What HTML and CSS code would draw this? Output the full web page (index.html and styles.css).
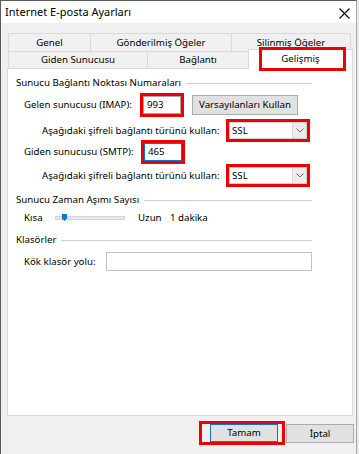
FILE: index.html
```html
<!DOCTYPE html>
<html lang="tr">
<head>
<meta charset="utf-8">
<title>Internet E-posta Ayarları</title>
<link rel="stylesheet" href="styles.css">
</head>
<body>
<div class="window">
  <div class="titlebar">
    <span class="title">Internet E-posta Ayarları</span>
    <svg class="close" width="11" height="11" viewBox="0 0 11 11"><path d="M0.5 0.5 L10.5 10.5 M10.5 0.5 L0.5 10.5" stroke="#000" stroke-width="1.1" fill="none"/></svg>
  </div>

  <div class="tabs">
    <div class="tabrow back">
      <div class="tab w83">Genel</div>
      <div class="tab w142">Gönderilmiş Öğeler</div>
      <div class="tab w120">Silinmiş Öğeler</div>
    </div>
    <div class="tabrow front">
      <div class="tab w140">Giden Sunucusu</div>
      <div class="tab w102">Bağlantı</div>
      <div class="tab w105 selected">Gelişmiş<span class="mark-tab"></span></div>
    </div>
  </div>

  <div class="panel">
    <div class="group-head g1"><span>Sunucu Bağlantı Noktası Numaraları</span></div>

    <div class="row r1">
      <span class="label lw116">Gelen sunucusu (IMAP):</span>
      <span class="mark mark-port"><span class="input port">993</span></span>
      <span class="btn defaults">Varsayılanları Kullan</span>
    </div>

    <div class="row r2 sub">
      <span class="label lw184">Aşağıdaki şifreli bağlantı türünü kullan:</span>
      <span class="mark mark-sel"><span class="select"><span class="sel-text">SSL</span><span class="sel-btn"><svg width="8" height="5" viewBox="0 0 8 5"><path d="M0.5 0.5 L4 4 L7.5 0.5" stroke="#707070" fill="none"/></svg></span></span></span>
    </div>

    <div class="row r3">
      <span class="label lw117">Giden sunucusu (SMTP):</span>
      <span class="mark mark-port"><span class="input port focused">465</span></span>
    </div>

    <div class="row r4 sub">
      <span class="label lw184">Aşağıdaki şifreli bağlantı türünü kullan:</span>
      <span class="mark mark-sel"><span class="select"><span class="sel-text">SSL</span><span class="sel-btn"><svg width="8" height="5" viewBox="0 0 8 5"><path d="M0.5 0.5 L4 4 L7.5 0.5" stroke="#707070" fill="none"/></svg></span></span></span>
    </div>

    <div class="group-head g2"><span>Sunucu Zaman Aşımı Sayısı</span></div>

    <div class="row slider-row">
      <span class="label lw31">Kısa</span>
      <span class="track"><span class="thumb"></span></span>
      <span class="label lw32 uzun">Uzun</span>
      <span class="label">1 dakika</span>
    </div>

    <div class="group-head g3"><span>Klasörler</span></div>

    <div class="row kok">
      <span class="label lw82">Kök klasör yolu:</span>
      <span class="input path"></span>
    </div>
  </div>

  <div class="footer">
    <span class="mark mark-ok"><span class="btn ok">Tamam</span></span>
    <span class="btn cancel">İptal</span>
  </div>
</div>
</body>
</html>
```

FILE: styles.css
```css
* { box-sizing: border-box; }
html, body { margin: 0; padding: 0; }
body {
  width: 359px;
  height: 454px;
  background: #e9e9e9;
  font-family: "Noto Sans", "Open Sans", sans-serif;
  font-size: 9.7px;
  color: #000;
  overflow: hidden;
}
.window {
  width: 357px;
  height: 454px;
  background: #f0f0f0;
  border-left: 1px solid #5a5a5a;
  border-top: 1px solid #5a5a5a;
  border-right: 1px solid #a9a9a9;
}
.titlebar {
  height: 22px;
  background: #fff;
  display: flex;
  align-items: center;
  justify-content: space-between;
  padding: 0 6px 1px 4px;
}
.title { font-size: 11px; line-height: 14px; }
.close { margin-top: 3px; }

.tabs { margin: 10px 0 0 7px; }
.tabrow { display: flex; }
.tab {
  border: 1px solid #d9d9d9;
  border-bottom: none;
  margin-left: -1px;
  background: #f0f0f0;
  display: flex;
  align-items: center;
  justify-content: center;
  line-height: 12px;
}
.tab:first-child { margin-left: 0; }
.back .tab { height: 18px; }
.front .tab { height: 17px; }
.front .tab.selected {
  position: relative;
  z-index: 1;
  background: #fff;
  height: 20px;
  margin-top: -2px;
  margin-bottom: -1px;
  padding-bottom: 1px;
}
.w83 { width: 83px; }
.w142 { width: 142px; }
.w120 { width: 120px; }
.w140 { width: 140px; }
.w102 { width: 102px; }
.w105 { width: 105px; }
.mark-tab {
  position: absolute;
  left: 10px;
  top: -3px;
  width: 87px;
  height: 24px;
  border: 3px solid #ee0000;
}

.panel {
  margin-left: 6px;
  width: 346px;
  height: 348px;
  background: #fff;
  border: 1px solid #d9d9d9;
  padding: 0 40px 0 8px;
}
.group-head {
  display: flex;
  align-items: center;
  height: 12px;
  line-height: 12px;
}
.group-head::after {
  content: "";
  flex: 1;
  height: 1px;
  background: #d0d0d0;
  margin-left: 5px;
}
.g1 { margin-top: 8px; }
.g2 { margin-top: 8px; }
.g3 { margin-top: 8px; }

.row {
  display: flex;
  align-items: center;
  height: 20px;
  padding-left: 8px;
}
.row.sub { padding-left: 26px; }
.r1 { margin-top: 6px; }
.r2 { margin-top: 6px; }
.r3 { margin-top: 1px; }
.r4 { margin-top: 4px; }
.slider-row { margin-top: 4px; height: 16px; }
.kok { margin-top: 6px; height: 19px; }

.label { line-height: 12px; white-space: nowrap; flex: none; }
.lw116 { width: 116px; }
.lw117 { width: 117px; }
.lw184 { width: 184px; }
.lw31 { width: 31px; }
.lw32 { width: 32px; }
.lw82 { width: 82px; }
.uzun { margin-left: 13px; }

.mark {
  border: 3px solid #ee0000;
  display: flex;
  flex: none;
}
.mark-port { width: 44px; height: 24px; margin: -2px 0; }
.mark-sel { width: 84px; height: 23px; margin: -2px 0 -1px; }

.input {
  display: flex;
  align-items: center;
  background: #fff;
  border: 1px solid #a8a8a8;
  padding-left: 3px;
  line-height: 12px;
}
.port { width: 38px; height: 18px; }
.port.focused { border-color: #0078d7; }
.path { width: 206px; height: 19px; border-color: #c3c3c3; flex: none; }

.select {
  display: flex;
  width: 78px;
  height: 17px;
  border: 1px solid #cfcfcf;
  background: #fff;
}
.sel-text { flex: 1; padding-left: 2px; line-height: 15px; }
.sel-btn {
  width: 14px;
  background: #ececec;
  border-left: 1px solid #dcdcdc;
  display: flex;
  align-items: center;
  justify-content: center;
}

.btn {
  display: flex;
  align-items: center;
  justify-content: center;
  background: #e1e1e1;
  border: 1px solid #adadad;
  line-height: 12px;
  flex: none;
}
.defaults { width: 106px; height: 20px; margin-left: 8px; }

.track {
  position: relative;
  width: 70px;
  height: 4px;
  background: #e7e7e7;
  border: 1px solid #d6d6d6;
  flex: none;
}
.thumb {
  position: absolute;
  left: 6px;
  top: -3px;
  width: 5px;
  height: 7px;
  background: #0078d7;
  clip-path: polygon(0 0, 100% 0, 100% 65%, 50% 100%, 0 65%);
}

.footer {
  display: flex;
  justify-content: flex-end;
  align-items: flex-start;
  margin-top: 5px;
  padding-right: 2px;
}
.mark-ok {
  height: 24px;
  padding: 0 4px 0 8px;
}
.ok {
  width: 68px;
  height: 18px;
  border-color: #0078d7;
}
.cancel {
  width: 68px;
  height: 19px;
  margin-left: 1px;
  margin-top: 3px;
}
```
